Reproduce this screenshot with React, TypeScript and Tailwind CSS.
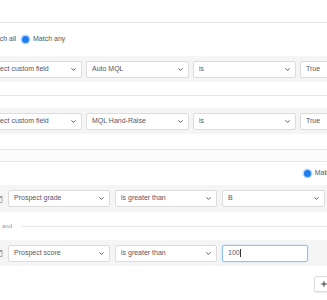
import { ChevronDown, Plus } from "lucide-react";

function Select({ label, className = "" }: { label: string; className?: string }) {
  return (
    <div
      className={`h-[17px] shrink-0 flex items-center justify-between bg-white border border-[#dcdcdc] rounded-[2px] pl-[5px] pr-[4px] text-[7px] text-[#5a5466] ${className}`}
    >
      <span className="whitespace-nowrap">{label}</span>
      <ChevronDown size={7} strokeWidth={3} className="text-[#444]" />
    </div>
  );
}

function Radio({ label }: { label: string }) {
  return (
    <div className="flex items-center gap-[4px]">
      <span className="w-[7px] h-[7px] rounded-full bg-[#1f7ef2] ring-[1.5px] ring-[#bcd8fb]" />
      <span className="text-[7px] text-[#555]">{label}</span>
    </div>
  );
}

function Trash() {
  return (
    <svg width="6" height="8" viewBox="0 0 6 8" className="shrink-0">
      <rect x="0.5" y="1" width="5" height="1" fill="#9a9a9a" />
      <rect x="1" y="2.5" width="4" height="5" fill="none" stroke="#9a9a9a" strokeWidth="0.8" />
    </svg>
  );
}

function FieldRow({ value }: { value: string }) {
  return (
    <div className="h-[26px] bg-[#f5f5f5] flex items-center gap-[4px] ml-[-17px]">
      <Select label="Select custom field" className="w-[99px] pl-[6px]" />
      <Select label={value} className="w-[103px]" />
      <Select label="is" className="w-[103px]" />
      <Select label="True" className="w-[103px]" />
    </div>
  );
}

export default function App() {
  return (
    <div
      className="w-[327px] h-[300px] overflow-hidden bg-white"
      style={{ fontFamily: '"Liberation Sans", Arial, sans-serif' }}
    >
      <div className="h-[22px]" />

      {/* group 1 */}
      <div className="border-t border-b border-[#e6e6e6]">
        <div className="h-[33px] flex items-center gap-[6px] ml-[-23px]">
          <Radio label="Match all" />
          <Radio label="Match any" />
        </div>
        <FieldRow value="Auto MQL" />
        <div className="h-[26px] flex items-center">
          <div className="flex-1 border-t border-[#e6e6e6]" />
        </div>
        <FieldRow value="MQL Hand-Raise" />
        <div className="h-[15px]" />
      </div>
      <div className="h-[11px] bg-[#fcfcfc]" />

      {/* group 2 */}
      <div className="border-t border-[#e6e6e6]">
        <div className="h-[23px] flex items-center justify-end mr-[-20px]">
          <Radio label="Match any" />
        </div>
        <div className="h-[27px] bg-[#f5f5f5] flex items-center gap-[5px] ml-[-3px]">
          <Trash />
          <Select label="Prospect grade" className="w-[102px]" />
          <Select label="is greater than" className="w-[102px]" />
          <Select label="B" className="w-[103px]" />
        </div>
        <div className="h-[28px] flex items-center gap-[10px] pl-[2px]">
          <span className="text-[6px] text-[#999]">and</span>
          <div className="flex-1 border-t border-[#e6e6e6]" />
        </div>
        <div className="h-[26px] bg-[#f5f5f5] flex items-center gap-[5px] ml-[-3px]">
          <Trash />
          <Select label="Prospect score" className="w-[102px]" />
          <Select label="is greater than" className="w-[102px]" />
          <div className="h-[17px] w-[86px] shrink-0 flex items-center bg-white border border-[#8cc3fb] rounded-[2px] pl-[5px] text-[7px] text-[#5a5466] shadow-[0_0_2px_#b7d9fc]">
            100<span className="w-px h-[8px] bg-[#333]" />
          </div>
        </div>
        <div className="flex justify-end pt-[10px] mr-[-12px]">
          <div className="w-[25px] h-[16px] border border-[#dcdcdc] rounded-[2px] bg-white shadow-[0_1px_1px_rgba(0,0,0,0.08)] flex items-center pl-[5px]">
            <Plus size={8} strokeWidth={3} className="text-[#333]" />
          </div>
        </div>
      </div>
    </div>
  );
}
